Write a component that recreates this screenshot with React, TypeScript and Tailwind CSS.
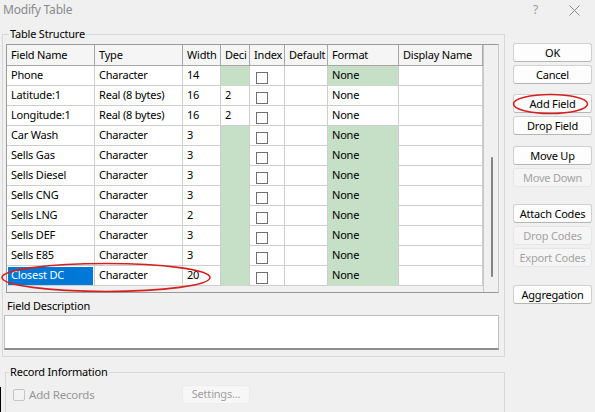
import React from "react"

type Row = {
  name: string
  type: string
  width: string
  deci: string | null
  fmtGreen: boolean
  selected?: boolean
}

const rows: Row[] = [
  { name: "Phone", type: "Character", width: "14", deci: null, fmtGreen: true },
  { name: "Latitude:1", type: "Real (8 bytes)", width: "16", deci: "2", fmtGreen: false },
  { name: "Longitude:1", type: "Real (8 bytes)", width: "16", deci: "2", fmtGreen: false },
  { name: "Car Wash", type: "Character", width: "3", deci: null, fmtGreen: true },
  { name: "Sells Gas", type: "Character", width: "3", deci: null, fmtGreen: true },
  { name: "Sells Diesel", type: "Character", width: "3", deci: null, fmtGreen: true },
  { name: "Sells CNG", type: "Character", width: "3", deci: null, fmtGreen: true },
  { name: "Sells LNG", type: "Character", width: "2", deci: null, fmtGreen: true },
  { name: "Sells DEF", type: "Character", width: "3", deci: null, fmtGreen: true },
  { name: "Sells E85", type: "Character", width: "3", deci: null, fmtGreen: true },
  { name: "Closest DC", type: "Character", width: "20", deci: null, fmtGreen: true, selected: true },
]

const headers = [
  { label: "Field Name", w: "w-[88px]" },
  { label: "Type", w: "w-[88px]" },
  { label: "Width", w: "w-[38px]" },
  { label: "Deci", w: "w-[29px]" },
  { label: "Index", w: "w-[35px]" },
  { label: "Default", w: "w-[43px]" },
  { label: "Format", w: "w-[71px]" },
  { label: "Display Name", w: "w-[84px]" },
]

const cell = "h-[20px] shrink-0 border-r border-b border-r-[#cdcdcd] flex items-center pl-[4px] pb-[1px] whitespace-nowrap overflow-hidden"
const white = "bg-white border-b-[#cdcdcd]"
const green = "bg-[#c5e0c6] border-b-[#c5e0c6]"

function Button({ label, disabled, className = "" }: { label: string; disabled?: boolean; className?: string }) {
  return (
    <button
      className={[
        "h-[19px] w-[79px] rounded-[3px] border text-[11px] leading-none flex items-center justify-center",
        disabled
          ? "bg-[#f5f5f5] border-[#e6e6e6] text-[#a3a3a3]"
          : "bg-[#fdfdfd] border-[#d0d0d0] border-b-[#b5b5b5] text-black",
        className,
      ].join(" ")}
    >
      {label}
    </button>
  )
}

function CheckBox() {
  return <div className="h-[12px] w-[12px] border border-[#6f6f6f] bg-white" />
}

export default function App() {
  return (
    <div className="relative w-[595px] h-[412px] overflow-hidden bg-[#f0f0f0] font-['Noto_Sans',sans-serif] text-[11px] tracking-[-0.2px] text-black select-none">
      {/* title bar */}
      <div className="h-[26px] flex items-start">
        <div className="pl-[3px] pt-[2px] text-[12px] leading-[16px] text-[#8a8a8a]">Modify Table</div>
        <div className="ml-auto flex pr-[1px]">
          <div className="w-[39px] h-[20px] flex items-center justify-center text-[12px] text-[#9a9a9a]">?</div>
          <div className="w-[39px] h-[20px] flex items-center justify-center">
            <svg width="11" height="11" viewBox="0 0 11 11">
              <path d="M0.5 0.5 L10.5 10.5 M10.5 0.5 L0.5 10.5" stroke="#8a8a8a" strokeWidth="1" />
            </svg>
          </div>
        </div>
      </div>

      <div className="flex">
        {/* left column */}
        <div className="ml-[2px] w-[503px]">
          <fieldset className="border border-[#d8d8d8] pb-[6px]">
            <legend className="ml-[6px] px-[1px] leading-[16px]">Table Structure</legend>

            {/* grid */}
            <div className="mt-[2px] ml-[3px] w-[493px] h-[249px] border border-[#9a9a9a] border-r-[#c8c8c8] flex">
              <div className="w-[476px] flex flex-col">
                <div className="flex">
                  {headers.map((h) => (
                    <div
                      key={h.label}
                      className={`${h.w} h-[21px] shrink-0 border-r border-b border-[#a6a6a6] bg-[#f5f5f5] flex items-center pl-[4px] whitespace-nowrap overflow-hidden`}
                    >
                      {h.label}
                    </div>
                  ))}
                </div>
                {rows.map((r) => (
                  <div key={r.name} className="flex">
                    <div className={`${cell} ${white} w-[88px] relative`}>
                      {r.selected ? (
                        <div className="absolute left-[1px] top-[1px] right-[1px] bottom-[0px] bg-[#0078d7] text-white flex items-center pl-[3px] pb-[1px]">
                          {r.name}
                        </div>
                      ) : (
                        r.name
                      )}
                    </div>
                    <div className={`${cell} ${white} w-[88px]`}>{r.type}</div>
                    <div className={`${cell} ${white} w-[38px]`}>{r.width}</div>
                    <div className={`${cell} ${r.deci ? white : green} w-[29px]`}>{r.deci}</div>
                    <div className={`${cell} ${white} w-[35px] items-start pt-[6px] pl-[6px]`}>
                      <CheckBox />
                    </div>
                    <div className={`${cell} ${white} w-[43px]`} />
                    <div className={`${cell} ${r.fmtGreen ? green : white} w-[71px]`}>None</div>
                    <div className={`${cell} ${white} w-[84px]`} />
                  </div>
                ))}
                <div className="flex-1 bg-[#f0f0f0]" />
              </div>
              {/* scrollbar */}
              <div className="w-[15px] bg-[#f0f0f0] border-l border-[#c8c8c8] relative">
                <div className="absolute left-[7px] top-[112px] h-[120px] w-[2px] rounded-full bg-[#858585]" />
              </div>
            </div>

            <div className="mt-[6px] pl-[4px] leading-[14px]">Field Description</div>
            <div className="mt-[2px] ml-[1px] w-[495px] h-[35px] bg-white border border-[#bdbdbd] border-b-2 border-b-[#8c8c8c]" />
          </fieldset>

          <fieldset className="mt-[7px] ml-[3px] w-[500px] h-[60px] border border-[#d8d8d8]">
            <legend className="ml-[3px] px-[1px] leading-[16px]">Record Information</legend>
            <div className="mt-[5px] flex items-center h-[19px]">
              <div className="w-[176px] pl-[7px] flex items-center">
                <div className="h-[12px] w-[12px] rounded-[2px] border border-[#c4c4c4] bg-[#f3f3f3]" />
                <span className="ml-[4px] text-[#969696] text-[11.5px]">Add Records</span>
              </div>
              <div className="h-[19px] w-[68px] rounded-[3px] bg-[#f7f7f7] border border-[#ececec] text-[#9e9e9e] flex items-center justify-center">
                Settings...
              </div>
            </div>
          </fieldset>
        </div>

        {/* right column */}
        <div className="ml-[8px] pt-[17px] flex flex-col">
          <Button label="OK" />
          <Button label="Cancel" className="mt-[3px]" />
          <Button label="Add Field" className="mt-[10px]" />
          <Button label="Drop Field" className="mt-[3px]" />
          <Button label="Move Up" className="mt-[11px]" />
          <Button label="Move Down" disabled className="mt-[3px]" />
          <Button label="Attach Codes" className="mt-[17px]" />
          <Button label="Drop Codes" disabled className="mt-[3px]" />
          <Button label="Export Codes" disabled className="mt-[3px]" />
          <Button label="Aggregation" className="mt-[18px]" />
        </div>
      </div>

      {/* stray edge */}
      <div className="absolute left-0 top-[387px] w-[1px] h-[25px] bg-black" />

      {/* red annotations */}
      <svg className="absolute inset-0 pointer-events-none" width="595" height="412">
        <ellipse cx="106" cy="277.5" rx="104" ry="14" fill="none" stroke="#d42020" strokeWidth="1.6" />
        <ellipse cx="550.5" cy="104" rx="37" ry="9.5" fill="none" stroke="#d42020" strokeWidth="1.6" />
      </svg>
    </div>
  )
}
